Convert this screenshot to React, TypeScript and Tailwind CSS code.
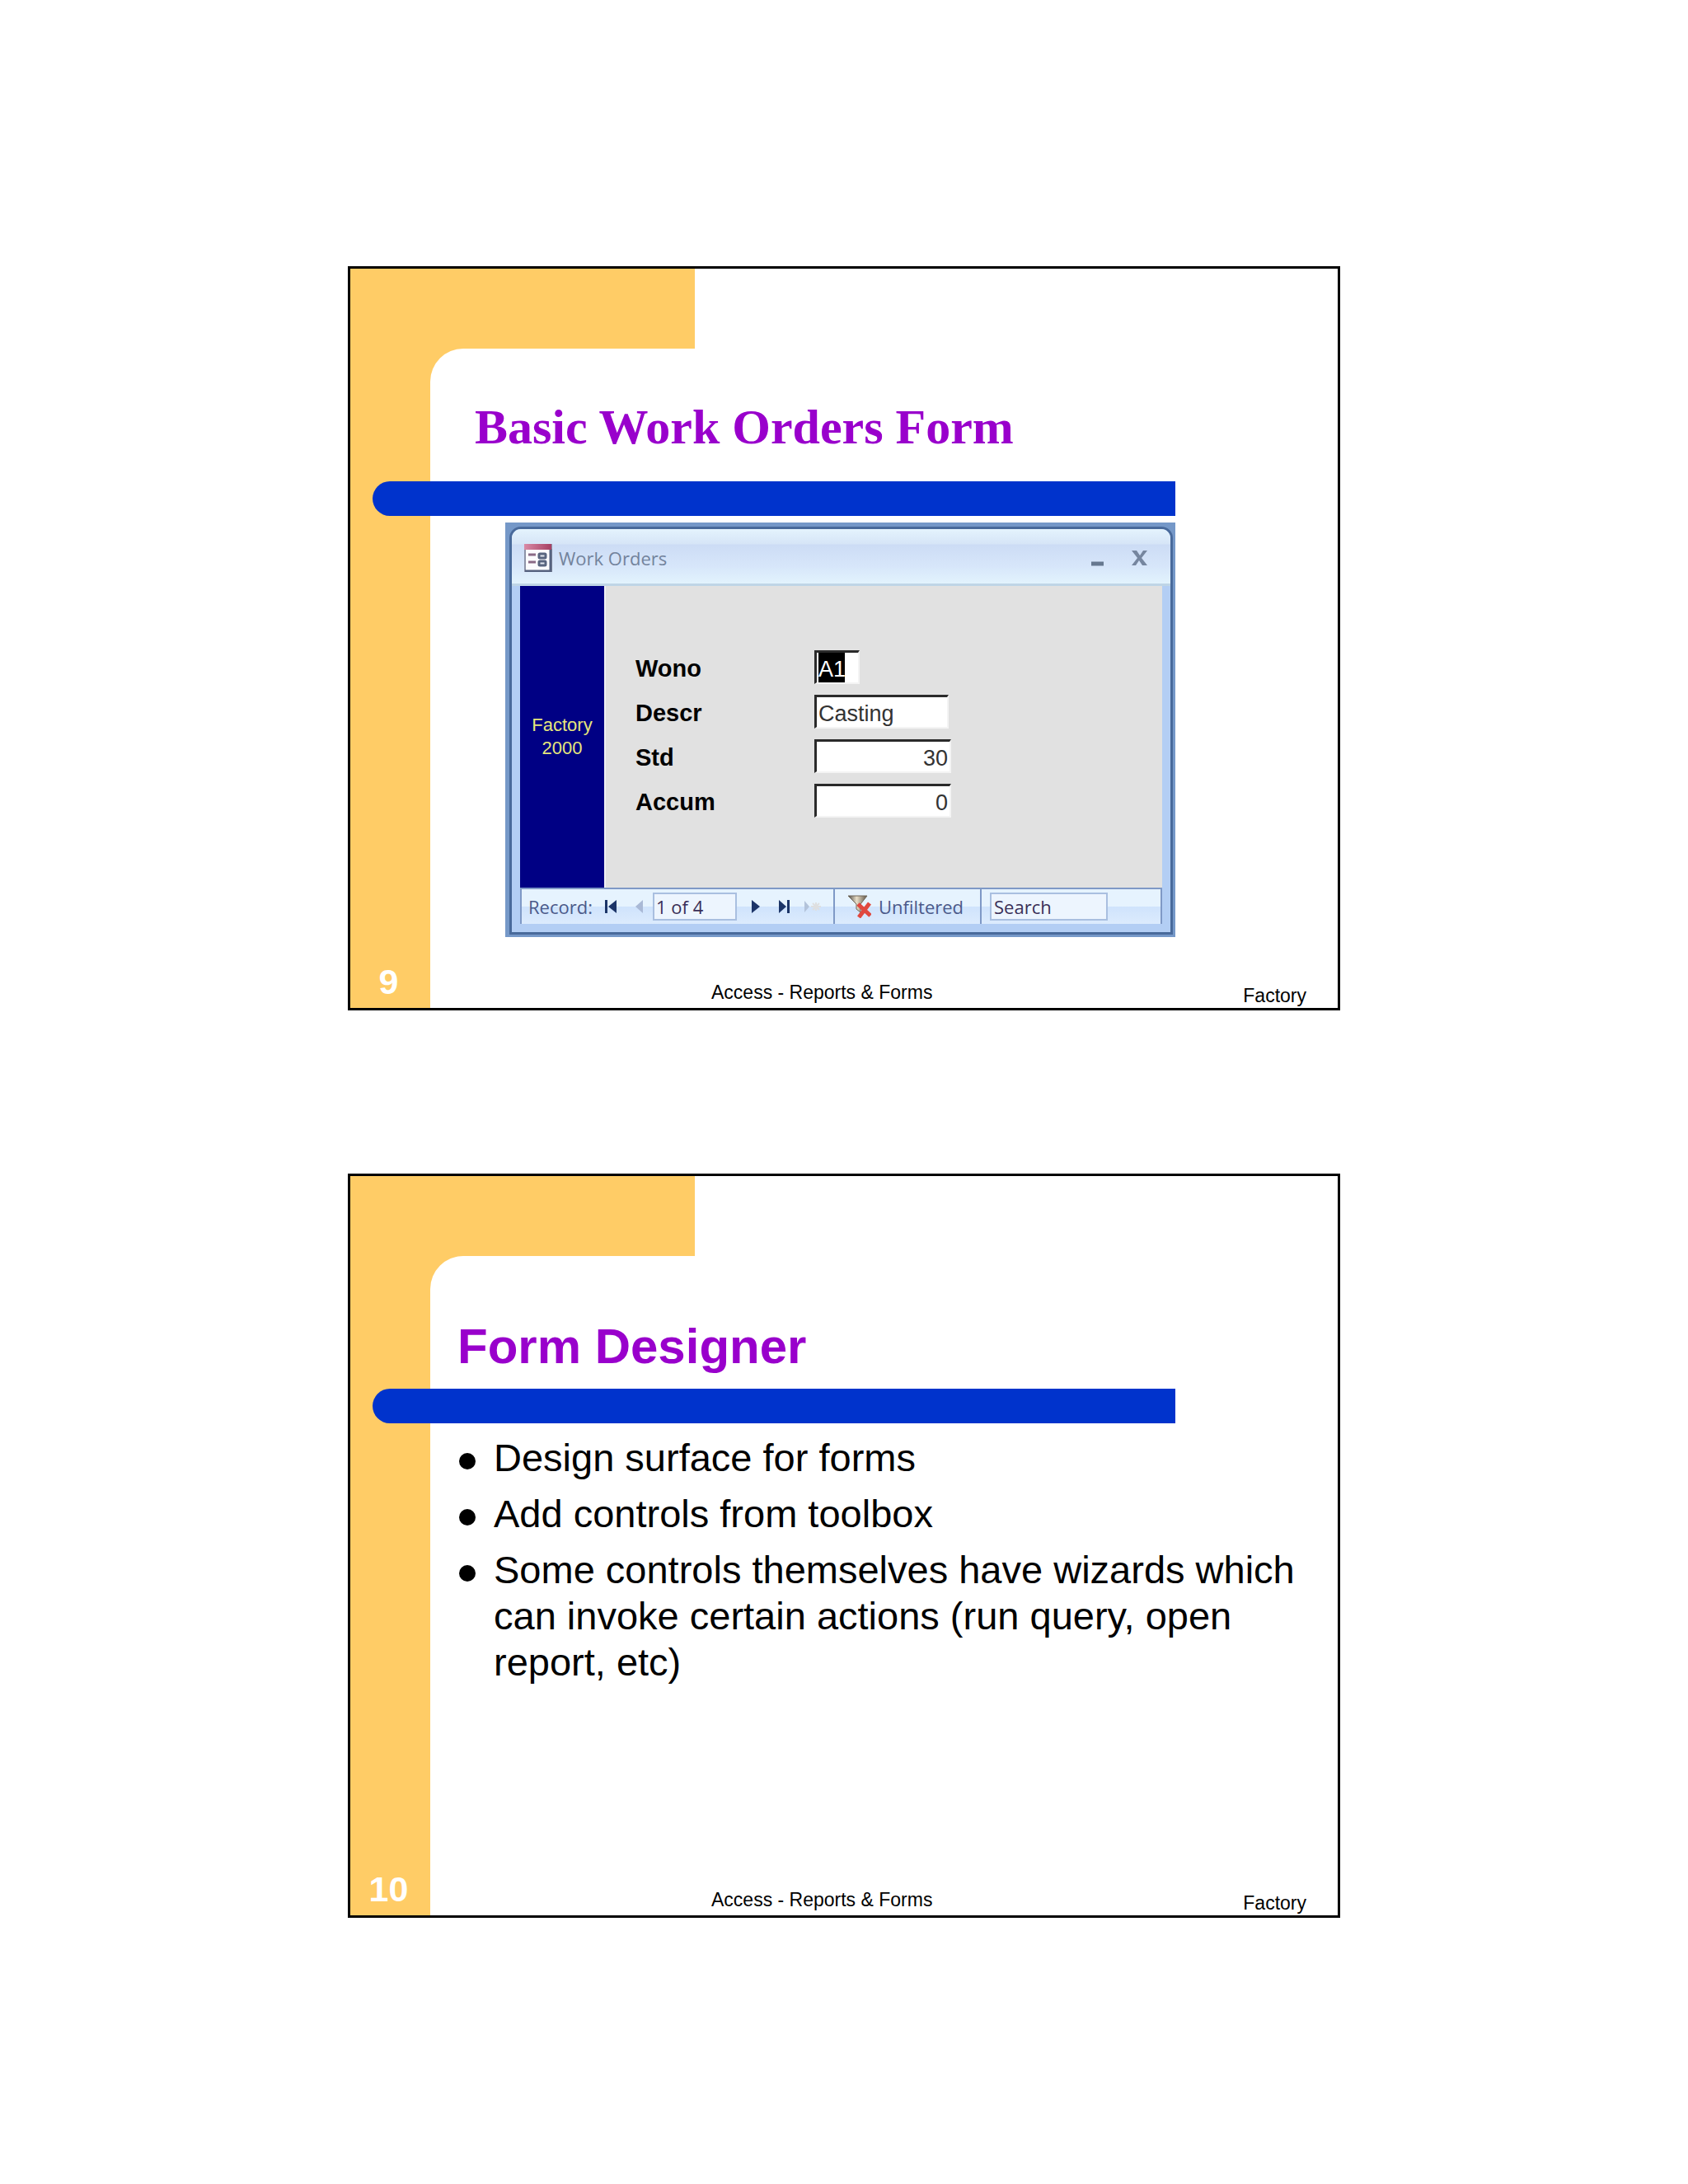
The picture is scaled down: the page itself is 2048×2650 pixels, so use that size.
import React, { useState } from 'react';

interface SlideProps {
  page: number;
  title: React.ReactNode;
  children: React.ReactNode;
}

const Slide: React.FC<SlideProps> = ({ page, title, children }) => (
  <section className="flex w-full min-h-[903px] border-3 border-black bg-white">
    <aside className="w-[97px] shrink-0 bg-[#ffcc66] flex items-end justify-center pb-2 pr-1">
      <span className="text-white font-bold text-[43px] leading-[48px]">{page}</span>
    </aside>

    <div className="flex-1 min-w-0 flex flex-col">
      <div className="h-[97px] w-[321px] bg-[#ffcc66]" />

      {/* Rounded inner corner of the frame */}
      <div className="bg-[linear-gradient(to_right,#ffcc66_60px,white_60px)]">
        <header className="h-[161px] flex items-end bg-white rounded-tl-[40px]">{title}</header>
      </div>

      <div className="relative -ml-[70px] mr-[197px] h-[42px] bg-[#0033cc] rounded-l-full" />

      {children}

      <footer className="mt-auto flex items-end justify-between pl-[341px] pr-[38px] pb-[3px] text-[23px] leading-[24px]">
        <span className="pb-1">Access - Reports &amp; Forms</span>
        <span>Factory</span>
      </footer>
    </div>
  </section>
);

const FormIcon = () => (
  <svg width="34" height="34" viewBox="0 0 34 34">
    <defs>
      <linearGradient id="formHead" x1="0" x2="1">
        <stop offset="0" stopColor="#d98aa6" />
        <stop offset="1" stopColor="#a63f63" />
      </linearGradient>
    </defs>
    <rect x="1" y="1" width="32" height="32" fill="#fbfbfe" stroke="#8d93a8" strokeWidth="2" />
    <path d="M32 6v27H1" fill="none" stroke="#56627f" strokeWidth="3" />
    <rect x="0" y="0" width="33" height="7" fill="url(#formHead)" />
    <path d="M5 13h9M5 22h9" stroke="#8a6a86" strokeWidth="3" />
    <rect x="18" y="12" width="8" height="5" rx="1" fill="#e4e8f0" stroke="#59657f" strokeWidth="3" />
    <rect x="18" y="21" width="8" height="5" rx="1" fill="#e4e8f0" stroke="#59657f" strokeWidth="3" />
  </svg>
);

const FilterIcon = () => (
  <svg width="28" height="28" viewBox="0 0 28 28">
    <defs>
      <linearGradient id="funnel" x1="0" x2="1">
        <stop offset="0" stopColor="#4d4a45" />
        <stop offset="0.45" stopColor="#e9dfc8" />
        <stop offset="1" stopColor="#5b5043" />
      </linearGradient>
    </defs>
    <path d="M0 1h23l-8 10v10l-5-4v-6z" fill="url(#funnel)" stroke="#6e6557" strokeWidth="1" />
    <path d="M12 11l15 14M26 10L13 27" stroke="#e0483f" strokeWidth="5" />
  </svg>
);

const fields = [
  { id: 'descr', label: 'Descr', value: 'Casting', box: 'w-[163px]', align: 'text-left' },
  { id: 'std', label: 'Std', value: '30', box: 'w-[166px]', align: 'text-right' },
  { id: 'accum', label: 'Accum', value: '0', box: 'w-[166px]', align: 'text-right' },
];

const fieldBox = 'h-[41px] border-t-3 border-l-3 border-b-2 border-r-2 border-t-[#2a2a2a] border-l-[#2a2a2a] border-b-[#f4f4f4] border-r-[#f4f4f4] bg-white';

const WorkOrdersWindow: React.FC = () => {
  const [wono, setWono] = useState('A1');
  const [record, setRecord] = useState('1 of 4');
  const [search, setSearch] = useState('Search');

  return (
    <div className="mt-2 ml-[91px] mr-[197px] bg-[#7598c8] pt-[5px] pl-[5px] pr-[3px] pb-[3px]">
      <div className="border-3 border-[#496a9b] rounded-t-[14px] bg-[#b3cef4] overflow-hidden">
        {/* Title bar */}
        <div className="h-[69px] flex items-center pt-1 pl-[15px] pr-[28px] border-b-3 border-[#bfd5e6] bg-[linear-gradient(to_bottom,#e4f3fd_0,#d6e5f7_18px,#ccdcf5_19px,#d7e6fa_45px,#e2f3fd_66px)] font-['Open_Sans',sans-serif]">
          <FormIcon />
          <span className="ml-2 text-[22px] leading-[30px] font-medium text-[#73839c]">Work Orders</span>
          <button aria-label="Minimize" className="ml-auto">
            <svg width="16" height="20" viewBox="0 0 16 20">
              <path d="M0 17h15" stroke="#66788f" strokeWidth="5" />
            </svg>
          </button>
          <button aria-label="Close" className="ml-[33px]">
            <svg width="19" height="20" viewBox="0 0 19 20">
              <path d="M0 1h6l4 6 4-6h5l-7 9 7 9h-6l-4-6-4 6H0l7-9z" fill="#76869f" />
            </svg>
          </button>
        </div>

        <div className="mx-[10px] mb-[10px]">
          <div className="h-[366px] flex bg-[#e1e1e1]">
            <div className="w-[102px] bg-[#000084] flex flex-col justify-center text-center text-[22px] leading-[28px] text-[#e6e67c]">
              <span>Factory</span>
              <span>2000</span>
            </div>
            <div className="flex-1 border-l-2 border-[#f0f0f4] pl-[36px] pt-[78px]">
              <div className="h-[54px] flex items-start">
                <label htmlFor="wono" className="w-[217px] pt-[2px] text-[29px] leading-[41px] font-bold">Wono</label>
                <div className={`w-[55px] ${fieldBox}`}>
                  <input
                    id="wono"
                    value={wono}
                    onChange={(e) => setWono(e.target.value)}
                    className="block w-[34px] h-[36px] pt-1 bg-black border-l-2 border-white text-white text-[27px] outline-none"
                  />
                </div>
              </div>
              {fields.map((f) => (
                <div key={f.id} className="h-[54px] flex items-start">
                  <label htmlFor={f.id} className="w-[217px] pt-[2px] text-[29px] leading-[41px] font-bold">{f.label}</label>
                  <div className={`${f.box} ${fieldBox}`}>
                    <input
                      id={f.id}
                      defaultValue={f.value}
                      className={`block w-full h-[36px] pt-1 px-[2px] text-[27px] text-[#333] outline-none ${f.align}`}
                    />
                  </div>
                </div>
              ))}
            </div>
          </div>

          {/* Record navigation */}
          <div className="h-[44px] flex items-center border-t-2 border-x-2 border-[#7f99c6] bg-[linear-gradient(to_bottom,#e6f3fe_50%,#cfe3fc_50%,#dcebfd_100%)] font-['Open_Sans',sans-serif] text-[22px] leading-[30px] font-medium text-[#4b5a8a]">
            <label htmlFor="record" className="w-[100px] pl-2">Record:</label>
            <button aria-label="First record">
              <svg width="16" height="16" viewBox="0 0 16 16" fill="#1c3568">
                <path d="M1 0h3v16H1zM15 0v16L5 8z" />
              </svg>
            </button>
            <button aria-label="Previous record" className="ml-[22px]">
              <svg width="10" height="16" viewBox="0 0 10 16" fill="#a9b9d6">
                <path d="M9 0v16L0 8z" />
              </svg>
            </button>
            <input
              id="record"
              value={record}
              onChange={(e) => setRecord(e.target.value)}
              className="ml-[11px] w-[102px] h-[34px] pl-[2px] border-2 border-[#a9bfe0] bg-[#edf5fe] text-[#3a2f57] outline-none"
            />
            <button aria-label="Next record" className="ml-[18px]">
              <svg width="10" height="16" viewBox="0 0 10 16" fill="#1c3568">
                <path d="M0 0v16l10-8z" />
              </svg>
            </button>
            <button aria-label="Last record" className="ml-[23px]">
              <svg width="14" height="16" viewBox="0 0 14 16" fill="#1c3568">
                <path d="M0 0v16l9-8zM10 0h3v16h-3z" />
              </svg>
            </button>
            <button aria-label="New record" className="ml-[17px]">
              <svg width="21" height="16" viewBox="0 0 21 16">
                <path d="M0 1v14l6-7z" fill="#b3c3da" />
                <path d="M8 8h12M14 3v10M10 4l8 8M18 4l-8 8" stroke="#dedfe0" strokeWidth="2" />
              </svg>
            </button>
            <button className="ml-[14px] h-full flex items-center gap-[9px] border-l-2 border-[#7f99c6] pl-4">
              <FilterIcon />
              Unfiltered
            </button>
            <div className="ml-auto w-[219px] h-full flex items-center border-l-2 border-[#7f99c6] pl-[10px]">
              <input
                aria-label="Search"
                value={search}
                onChange={(e) => setSearch(e.target.value)}
                className="w-[143px] h-[34px] pl-[3px] border-2 border-[#a9bfe0] bg-[#edf5fe] text-[#3a2f57] outline-none"
              />
            </div>
          </div>
        </div>
      </div>
    </div>
  );
};

const points = [
  'Design surface for forms',
  'Add controls from toolbox',
  'Some controls themselves have wizards which can invoke certain actions (run query, open report, etc)',
];

export default function App() {
  return (
    <main className="min-h-screen bg-white text-black font-['Liberation_Sans',Arial,sans-serif] pt-[323px] pb-[323px]">
      <div className="mx-auto max-w-[1204px] flex flex-col gap-[198px]">
        <Slide
          page={9}
          title={
            <h1 className="pl-[54px] pb-[36px] text-[60px] leading-[60px] font-bold text-[#9900cc] font-['Liberation_Serif','Times_New_Roman',serif]">
              Basic Work Orders Form
            </h1>
          }
        >
          <WorkOrdersWindow />
        </Slide>

        <Slide
          page={10}
          title={<h1 className="pl-[33px] pb-[21px] text-[60px] leading-[60px] font-bold text-[#9900cc]">Form Designer</h1>}
        >
          <ul className="mt-[14px] pl-[35px] pr-[40px] flex flex-col gap-3 text-[47px] leading-[56px]">
            {points.map((point) => (
              <li key={point} className="flex items-start gap-[22px]">
                <span className="mt-[22px] size-5 shrink-0 rounded-full bg-black" />
                <span>{point}</span>
              </li>
            ))}
          </ul>
        </Slide>
      </div>
    </main>
  );
}
